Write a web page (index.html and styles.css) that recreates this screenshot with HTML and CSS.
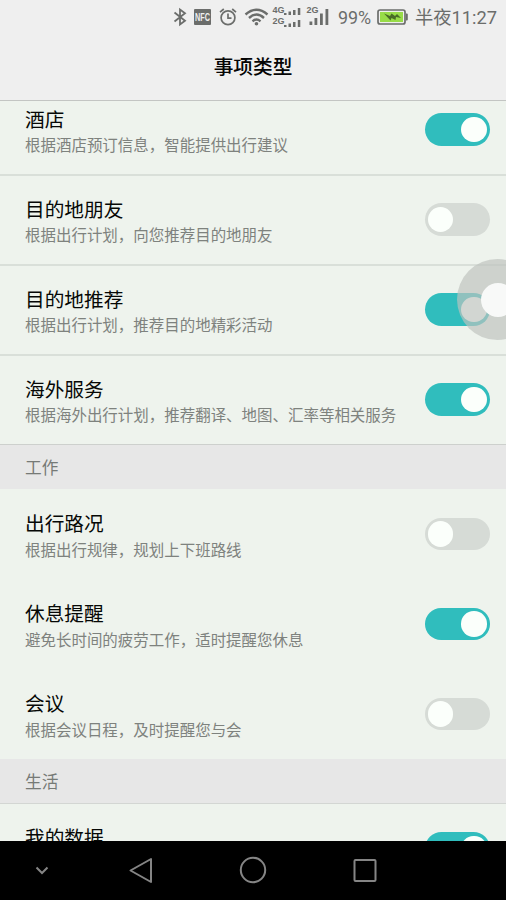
FILE: index.html
```html
<!DOCTYPE html>
<html lang="zh-CN">
<head>
<meta charset="utf-8">
<meta name="viewport" content="width=device-width, initial-scale=1">
<title>事项类型</title>
<link rel="stylesheet" href="styles.css">
</head>
<body>
<div class="phone">
  <header class="top">
    <div class="status">
      <svg class="icon-bt" width="14" height="18" viewBox="0 0 14 18" fill="none" stroke="#6b6d6b" stroke-width="1.8"><path d="M1.5 4.5 L12 12.8 L7 16.5 V1.5 L12 5.2 L1.5 13.5"/></svg>
      <svg class="icon-nfc" width="17" height="16" viewBox="0 0 17 16"><rect width="17" height="16" rx="1" fill="#6b6d6b"/><text x="8.5" y="12.3" text-anchor="middle" textLength="15" lengthAdjust="spacingAndGlyphs" class="nfc-text">NFC</text></svg>
      <svg class="icon-alarm" width="18" height="18" viewBox="0 0 18 18" fill="none" stroke="#6b6d6b" stroke-width="1.7"><circle cx="9" cy="9.8" r="6.9"/><path d="M9 5.5V10.2H12.5M1 4.2L4.8 1M17 4.2L13.2 1"/></svg>
      <svg class="icon-wifi" width="25" height="18" viewBox="0 0 25 18" fill="none" stroke="#6b6d6b" stroke-width="2.4"><path d="M1.5 6.5Q12.5 -3 23.5 6.5M5 10Q12.5 3.2 20 10M8.5 13.3Q12.5 9.8 16.5 13.3"/><circle cx="12.5" cy="15.7" r="1.8" fill="#6b6d6b" stroke="none"/></svg>
      <svg class="icon-dual" width="30" height="24" viewBox="0 0 30 24" fill="#6b6d6b"><text x="0.500" y="7.500" textLength="12" lengthAdjust="spacingAndGlyphs" class="net-text">4G</text><text x="0.500" y="18.500" textLength="12" lengthAdjust="spacingAndGlyphs" class="net-text">2G</text><path d="M12 8h2.500v2H12zM16.500 6.500h2.500V10h-2.500zM21 5h2.500v5H21zM25.800 3h2.500v7h-2.500zM12 20h2.500v2H12zM16.500 18.500h2.500V22h-2.500zM21 17h2.500v5H21zM25.800 15h2.500v7h-2.500z"/></svg>
      <svg class="icon-signal" width="24" height="24" viewBox="0 0 24 24" fill="#6b6d6b"><text x="0.500" y="7.500" textLength="12" lengthAdjust="spacingAndGlyphs" class="net-text">2G</text><path d="M3.500 16.500h2.800V20H3.500zM8.500 13h2.800v7H8.500zM14 8.500h2.800V20H14zM19.500 4h2.800v16h-2.800z"/></svg>
      <span class="percent">99%</span>
      <svg class="icon-battery" width="31" height="16" viewBox="0 0 31 16"><rect x="1" y="1" width="27" height="14" rx="2" fill="#efefef" stroke="#6b6d6b" stroke-width="1.7"/><rect x="3" y="3" width="23" height="10" fill="#98dc48"/><path d="M29 4.500h.8q1 0 1 1v5q0 1-1 1H29z" fill="#6b6d6b"/><path d="M7 4.500L13 7L14.500 4.500L18 7L20 5L24 9L19 8L18.500 11L14.500 9L13.500 11.500Z" fill="#496b27"/></svg>
      <span class="clock">半夜11:27</span>
    </div>
    <h1 class="heading">事项类型</h1>
  </header>

  <main class="list">
    <section class="travel">
      <div class="row"><div class="copy"><h2>酒店</h2><p>根据酒店预订信息，智能提供出行建议</p></div><span class="switch on"></span></div>
      <div class="row"><div class="copy"><h2>目的地朋友</h2><p>根据出行计划，向您推荐目的地朋友</p></div><span class="switch"></span></div>
      <div class="row"><div class="copy"><h2>目的地推荐</h2><p>根据出行计划，推荐目的地精彩活动</p></div><span class="switch on"></span></div>
      <div class="row"><div class="copy"><h2>海外服务</h2><p>根据海外出行计划，推荐翻译、地图、汇率等相关服务</p></div><span class="switch on"></span></div>
    </section>
    <section class="plain">
      <h3 class="group">工作</h3>
      <div class="row"><div class="copy"><h2>出行路况</h2><p>根据出行规律，规划上下班路线</p></div><span class="switch"></span></div>
      <div class="row"><div class="copy"><h2>休息提醒</h2><p>避免长时间的疲劳工作，适时提醒您休息</p></div><span class="switch on"></span></div>
      <div class="row"><div class="copy"><h2>会议</h2><p>根据会议日程，及时提醒您与会</p></div><span class="switch"></span></div>
    </section>
    <section class="plain">
      <h3 class="group lined">生活</h3>
      <div class="row last"><div class="copy"><h2>我的数据</h2></div><span class="switch on"></span></div>
    </section>
  </main>

  <nav class="navbar">
    <svg width="84" height="59" viewBox="0 0 84 59" fill="none" stroke="#858585" stroke-width="2"><path d="M36.500 26.500L42 32L47.500 26.500"/></svg>
    <svg width="113" height="59" viewBox="0 0 113 59" fill="none" stroke="#858585" stroke-width="2" stroke-linejoin="round"><path d="M67 18V41L46.500 29.500Z"/></svg>
    <svg width="112" height="59" viewBox="0 0 112 59" fill="none" stroke="#858585" stroke-width="2"><circle cx="56" cy="29" r="12.200"/></svg>
    <svg width="112" height="59" viewBox="0 0 112 59" fill="none" stroke="#858585" stroke-width="2"><rect x="45.500" y="19" width="21" height="21" rx="1"/></svg>
  </nav>
  <div class="assist"></div>
</div>
</body>
</html>
```
FILE: styles.css
```css
* { box-sizing: border-box; }
body { margin: 0; }
h1, h2, h3, p { margin: 0; font-weight: 400; }

.phone {
  position: relative;
  display: flex;
  flex-direction: column;
  width: 506px;
  height: 900px;
  overflow: hidden;
  background: #eef3ed;
  font-family: Roboto, "Noto Sans CJK SC", sans-serif;
}

.top {
  flex: none;
  height: 101px;
  background: #efefef;
  border-bottom: 1px solid #c3c5c3;
}

.status {
  display: flex;
  align-items: center;
  height: 34px;
  padding-left: 173px;
  color: #6b6d6b;
  font-size: 17.9px;
  line-height: 35px;
  white-space: nowrap;
}
.status svg { flex: none; overflow: visible; }
.icon-nfc { margin-left: 7px; }
.icon-alarm { margin-left: 8px; }
.icon-wifi { margin-left: 7px; }
.icon-dual { margin-left: 3px; }
.icon-signal { margin-left: 4px; }
.percent { width: 39px; margin-left: 8px; }
.icon-battery { margin-left: 0; }
.clock { margin-left: 7px; font-size: 18.3px; }
.nfc-text { font: 700 11px "Liberation Sans", sans-serif; fill: #efefef; }
.net-text { font: 700 8.5px "Liberation Sans", sans-serif; }

.heading {
  height: 66px;
  color: #050505;
  font-size: 19.7px;
  font-weight: 500;
  line-height: 67px;
  text-align: center;
}

.list { flex: 1; min-height: 0; overflow: hidden; }
.travel { margin-top: -15px; }

.row {
  display: flex;
  justify-content: space-between;
  height: 90px;
  padding: 0 16.5px 0 25px;
}
.travel .row { border-bottom: 2px solid #d9dfd9; }
.travel .row:last-child { height: 89px; border-bottom: 1px solid #cdd0cd; }

.copy { padding-top: 21px; white-space: nowrap; }
.copy h2 {
  height: 27px;
  color: #060806;
  font-size: 19.7px;
  line-height: 28px;
}
.copy p {
  height: 24px;
  color: #7e827e;
  font-size: 15.48px;
  line-height: 24px;
}
.plain .copy { padding-top: 22px; }
.plain .last .copy { padding-top: 21px; }

.switch {
  flex: none;
  width: 65px;
  height: 32.5px;
  margin-top: 27.2px;
  padding: 3.5px 3px;
  border-radius: 17px;
  background: #d6dbd6;
}
.plain .switch { margin-top: 28.8px; }
.plain .last .switch { margin-top: 28px; }
.switch::before {
  content: "";
  display: block;
  width: 25.5px;
  height: 25.5px;
  border-radius: 50%;
  background: #fbfffb;
}
.switch.on { background: #30bdbd; }
.switch.on::before { margin-left: auto; }

.plain .copy p { line-height: 26px; }

.group {
  height: 44px;
  padding-left: 25px;
  background: #e7e7e7;
  color: #767a76;
  font-size: 16.7px;
  line-height: 48px;
}
.lined { height: 45px; border-bottom: 1px solid #d3d6d3; }

.navbar {
  display: flex;
  flex: none;
  height: 59px;
  background: #000;
}

.assist {
  position: absolute;
  top: 259px;
  left: 457px;
  display: grid;
  place-items: center;
  width: 81px;
  height: 81px;
  border-radius: 50%;
  background: rgba(190, 194, 190, 0.68);
}
.assist::before {
  content: "";
  width: 34px;
  height: 34px;
  border-radius: 50%;
  background: #f8f9f8;
}
```
